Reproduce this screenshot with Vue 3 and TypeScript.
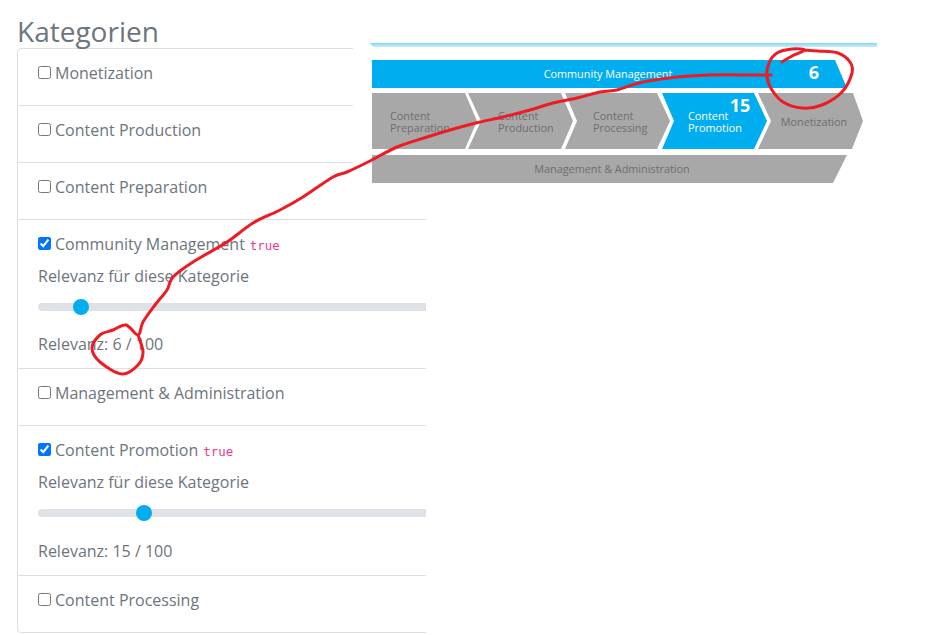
<script setup lang="ts">
import { ref } from 'vue'

interface Category {
  name: string
  checked: boolean
  relevance: number
}

const categories = ref<Category[]>([
  { name: 'Monetization', checked: false, relevance: 1 },
  { name: 'Content Production', checked: false, relevance: 1 },
  { name: 'Content Preparation', checked: false, relevance: 1 },
  { name: 'Community Management', checked: true, relevance: 6 },
  { name: 'Management & Administration', checked: false, relevance: 1 },
  { name: 'Content Promotion', checked: true, relevance: 15 },
  { name: 'Content Processing', checked: false, relevance: 1 },
])

// hand drawn annotation, points traced from the screenshot
const topCircle = [
  [782, 62], [792, 56], [805, 50], [792, 49], [777, 53], [769, 63], [767, 77], [772, 90],
  [783, 102], [802, 108], [822, 105], [842, 92], [852, 73], [850, 62], [838, 53], [818, 51], [805, 50],
]
const line = [
  [771, 75], [755, 75], [710, 75], [677, 77], [648, 81], [632, 85], [617, 90], [600, 92],
  [577, 98], [553, 103], [530, 110], [503, 117], [480, 122], [457, 128], [427, 137], [397, 147],
  [370, 161], [347, 172], [333, 177], [303, 197], [280, 210], [253, 223], [227, 242], [193, 262],
  [173, 277], [167, 290], [155, 305], [143, 322], [138, 335], [126, 325], [113, 330], [100, 335],
  [92, 348], [100, 362], [122, 374], [138, 365], [143, 352], [138, 335],
]

// catmull-rom so the curve goes through every traced point
function smooth(pts: number[][]): string {
  let d = `M${pts[0][0]} ${pts[0][1]}`
  for (let i = 0; i < pts.length - 1; i++) {
    const p0 = pts[Math.max(i - 1, 0)]
    const p1 = pts[i]
    const p2 = pts[i + 1]
    const p3 = pts[Math.min(i + 2, pts.length - 1)]
    const c1x = p1[0] + (p2[0] - p0[0]) / 6
    const c1y = p1[1] + (p2[1] - p0[1]) / 6
    const c2x = p2[0] - (p3[0] - p1[0]) / 6
    const c2y = p2[1] - (p3[1] - p1[1]) / 6
    d += `C${c1x} ${c1y} ${c2x} ${c2y} ${p2[0]} ${p2[1]}`
  }
  return d
}

const scribbles = [smooth(topCircle), smooth(line)]
</script>

<template>
  <div class="page">
    <div class="content">
      <h2 class="title">Kategorien</h2>
      <ul class="cat-list">
        <li v-for="cat in categories" :key="cat.name" class="cat-item">
          <label class="cat-label">
            <input v-model="cat.checked" type="checkbox" class="cat-check" />
            <span>{{ cat.name }}</span>
            <code v-if="cat.checked" class="cat-flag">true</code>
          </label>
          <template v-if="cat.checked">
            <div class="rel-title">Relevanz für diese Kategorie</div>
            <input v-model.number="cat.relevance" type="range" min="1" max="100" class="rel-range" />
            <div class="rel-value">Relevanz: {{ cat.relevance }} / 100</div>
          </template>
        </li>
      </ul>
    </div>

    <svg class="chain" viewBox="353 40 530 179" width="530" height="179">
      <defs>
        <linearGradient id="band" x1="0" y1="0" x2="0" y2="1">
          <stop offset="0" stop-color="#7fd6f7" />
          <stop offset="1" stop-color="#cdeefb" />
        </linearGradient>
      </defs>
      <path d="M370 43H877V47H375Q372 47 370 43Z" fill="url(#band)" />

      <polygon points="372,60 835,60 847,88 372,88" fill="#00adef" />
      <text x="608" y="78" text-anchor="middle" class="t-small t-white">Community Management</text>
      <text x="814" y="79" text-anchor="middle" class="t-num">6</text>

      <polygon points="372,93 465,93 477,121 465,149 372,149" fill="#a8a8a8" />
      <polygon points="468,93 561,93 573,121 561,149 468,149 481,121" fill="#a8a8a8" />
      <polygon points="565,93 657,93 670,121 657,149 565,149 577,121" fill="#a8a8a8" />
      <polygon points="662,93 754,93 767,121 754,149 662,149 674,121" fill="#00adef" />
      <polygon points="758,93 853,93 863,121 852,149 758,149 771,121" fill="#a8a8a8" />

      <text class="t-small" x="390" y="120">Content</text>
      <text class="t-small" x="390" y="132">Preparation</text>
      <text class="t-small" x="498" y="120">Content</text>
      <text class="t-small" x="498" y="132">Production</text>
      <text class="t-small" x="593" y="120">Content</text>
      <text class="t-small" x="593" y="132">Processing</text>
      <text class="t-small t-white" x="688" y="120">Content</text>
      <text class="t-small t-white" x="688" y="132">Promotion</text>
      <text class="t-num" x="740" y="112" text-anchor="middle">15</text>
      <text class="t-small" x="814" y="126" text-anchor="middle">Monetization</text>

      <polygon points="372,155 847,155 833,183 372,183" fill="#a8a8a8" />
      <text class="t-small" x="612" y="173" text-anchor="middle">Management &amp; Administration</text>
    </svg>

    <svg class="scribble" viewBox="0 0 950 635" width="950" height="635">
      <path v-for="d in scribbles" :key="d" :d="d" />
    </svg>
  </div>
</template>

<style scoped>
.page {
  position: relative;
  width: 950px;
  height: 635px;
  overflow: hidden;
  background: #fff;
  font-family: "Open Sans", "Noto Sans", sans-serif;
  color: #6c757d;
}

.content {
  width: 426px;
  height: 635px;
  padding: 15px 0 0 17px;
  box-sizing: border-box;
  overflow: hidden;
}

.title {
  margin: 0;
  font-size: 28px;
  font-weight: 400;
  line-height: 33px;
}

.cat-list {
  width: 751px;
  margin: 0;
  padding: 0;
  list-style: none;
  border: 1px solid #dfdfdf;
  border-radius: 4px;
  box-sizing: border-box;
}

.cat-item {
  padding: 12px 20px;
  border-bottom: 1px solid #dfdfdf;
}

.cat-item:last-child {
  border-bottom: none;
}

.cat-label {
  display: block;
  height: 24px;
  margin-bottom: 8px;
  font-size: 16px;
  line-height: 24px;
}

.cat-check {
  width: 13px;
  height: 13px;
  margin: 0 4px 0 0;
}

.cat-flag {
  margin-left: 5px;
  font-family: "DejaVu Sans Mono", monospace;
  font-size: 12.4px;
  color: #e83e8c;
}

.rel-title,
.rel-value {
  font-size: 16px;
  line-height: 24px;
}

.rel-title {
  margin-bottom: 8px;
}

.rel-range {
  display: block;
  width: 709px;
  height: 22px;
  margin: 0 0 14.4px;
  padding: 0;
  background: transparent;
  appearance: none;
  -webkit-appearance: none;
}

.rel-range::-webkit-slider-runnable-track {
  height: 8px;
  border-radius: 4px;
  background: #dee2e6;
}

.rel-range::-webkit-slider-thumb {
  width: 16px;
  height: 16px;
  margin-top: -4px;
  border-radius: 50%;
  background: #00adef;
  -webkit-appearance: none;
}

.chain {
  position: absolute;
  left: 353px;
  top: 40px;
  display: block;
  background: #fff;
}

.t-small {
  font-size: 10.85px;
  fill: #6e6e6e;
}

.t-white {
  fill: #fff;
}

.t-num {
  font-size: 18px;
  font-weight: 700;
  fill: #fff;
}

.scribble {
  position: absolute;
  left: 0;
  top: 0;
  pointer-events: none;
}

.scribble path {
  fill: none;
  stroke: #ed1c24;
  stroke-width: 3;
  stroke-linejoin: round;
  stroke-linecap: round;
}
</style>

<style>
body {
  margin: 0;
}
</style>
